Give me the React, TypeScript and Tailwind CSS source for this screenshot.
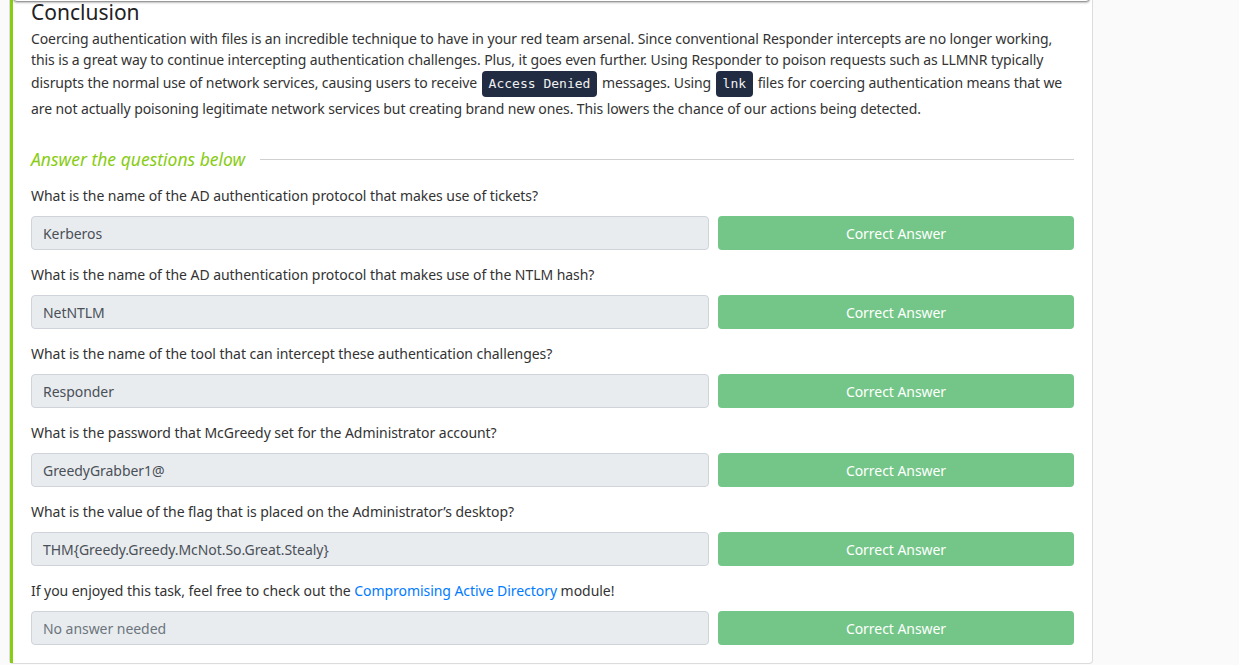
import React from "react";

const qs = [
  { q: "What is the name of the AD authentication protocol that makes use of tickets?", a: "Kerberos" },
  { q: "What is the name of the AD authentication protocol that makes use of the NTLM hash?", a: "NetNTLM" },
  { q: "What is the name of the tool that can intercept these authentication challenges?", a: "Responder" },
  { q: "What is the password that McGreedy set for the Administrator account?", a: "GreedyGrabber1@" },
  { q: "What is the value of the flag that is placed on the Administrator\u2019s desktop?", a: "THM{Greedy.Greedy.McNot.So.Great.Stealy}" },
];

function Row({ value, muted }: { value: string; muted?: boolean }) {
  return (
    <div className="flex gap-[9px] h-[34px]">
      <div
        className={`w-[678px] h-[34px] bg-[#e9ecef] border border-[#ced4da] rounded-[4px] flex items-center pl-[11px] text-[14px] ${
          muted ? "text-[#6c757d]" : "text-[#495057]"
        }`}
      >
        {value}
      </div>
      <div className="w-[356px] h-[34px] bg-[#73c687] rounded-[4px] flex items-center justify-center text-white text-[14px]">
        Correct Answer
      </div>
    </div>
  );
}

function Code({ children }: { children: React.ReactNode }) {
  return (
    <code
      className="inline-block bg-[#212c42] text-[#f1f1f1] rounded-[4px] px-[7px] h-[26px] text-[13px] leading-[26px] align-middle mx-[1px] tracking-normal"
      style={{ fontFamily: '"DejaVu Sans Mono", "Liberation Mono", monospace' }}
    >
      {children}
    </code>
  );
}

export default function App() {
  return (
    <div
      className="min-h-[665px] bg-[#fafafa] relative overflow-hidden text-[#333] tracking-[-0.05px]"
      style={{ fontFamily: '"Noto Sans", "Open Sans", sans-serif' }}
    >
      <div className="w-[1084px] ml-[9px] h-[664px] bg-white border border-[#dcdcdc] border-t-0 rounded-b-[4px] flex">
        <div className="w-[3px] bg-[#88cc14] shrink-0" />
        <div className="flex-1 pl-[18px] pr-[18px]">
          <h2 className="text-[21px] leading-[24px] text-[#222] tracking-normal">Conclusion</h2>
          <p className="text-[14px] leading-[21px] mt-[4px] tracking-[-0.1px]">
            <span className="block whitespace-nowrap">
              Coercing authentication with files is an incredible technique to have in your red team arsenal. Since conventional Responder intercepts are no longer working,
            </span>
            <span className="block whitespace-nowrap">
              this is a great way to continue intercepting authentication challenges. Plus, it goes even further. Using Responder to poison requests such as LLMNR typically
            </span>
            <span className="block whitespace-nowrap py-[1px]">
              disrupts the normal use of network services, causing users to receive <Code>Access Denied</Code> messages. Using <Code>lnk</Code> files for coercing authentication means that we
            </span>
            <span className="block whitespace-nowrap">
              are not actually poisoning legitimate network services but creating brand new ones. This lowers the chance of our actions being detected.
            </span>
          </p>
          <div className="flex items-center gap-[15px] mt-[28px] h-[24px]">
            <span className="italic text-[#88cc14] text-[17.5px] tracking-normal">Answer the questions below</span>
            <div className="flex-1 h-px bg-[#d0d0d0]" />
          </div>
          <div className="mt-[14px] flex flex-col">
            {qs.map((x) => (
              <div key={x.a} className="mb-[14px]">
                <div className="text-[14px] leading-[22px] mb-[9px]">{x.q}</div>
                <Row value={x.a} />
              </div>
            ))}
            <div>
              <div className="text-[14px] leading-[22px] mb-[9px]">
                If you enjoyed this task, feel free to check out the{" "}
                <span className="text-[#007bff]">Compromising Active Directory</span> module!
              </div>
              <Row value="No answer needed" muted />
            </div>
          </div>
        </div>
      </div>
      <div className="absolute left-[13px] top-[-10px] w-[1077px] h-[12px] bg-white border border-[#999] rounded-b-[4px] shadow-[0_1px_2px_rgba(0,0,0,0.25)]" />
    </div>
  );
}
